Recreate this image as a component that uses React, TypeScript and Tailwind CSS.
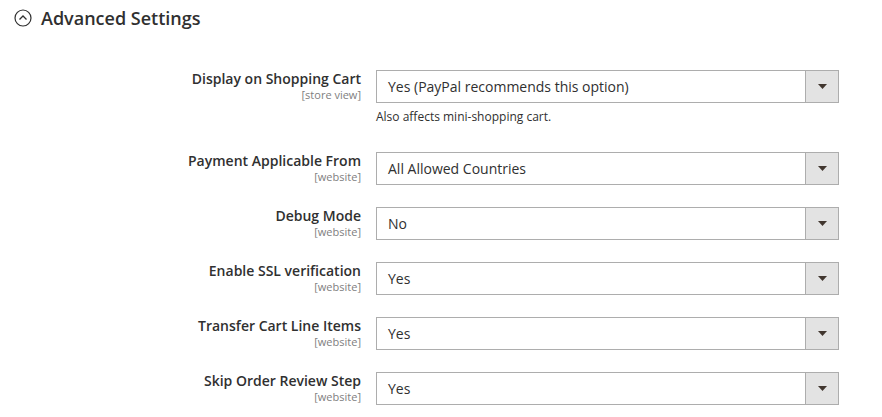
import React from 'react';

type Row = {
  label: string;
  scope: string;
  value: string;
  note?: string;
};

const ROWS: Row[] = [
  {
    label: 'Display on Shopping Cart',
    scope: '[store view]',
    value: 'Yes (PayPal recommends this option)',
    note: 'Also affects mini-shopping cart.'
  },
  { label: 'Payment Applicable From', scope: '[website]', value: 'All Allowed Countries' },
  { label: 'Debug Mode', scope: '[website]', value: 'No' },
  { label: 'Enable SSL verification', scope: '[website]', value: 'Yes' },
  { label: 'Transfer Cart Line Items', scope: '[website]', value: 'Yes' },
  { label: 'Skip Order Review Step', scope: '[website]', value: 'Yes' }
];

function SelectBox({ value }: { value: string }) {
  return (
    <div className="flex h-[33px] w-[463px] border border-[#adadad] bg-white">
      <div className="flex flex-1 items-center pl-[11px] text-[14px] text-[#303030]">{value}</div>
      <div className="flex w-[33px] items-center justify-center border-l border-[#adadad] bg-[#e3e3e3]">
        <svg width="9" height="5" viewBox="0 0 9 5">
          <path d="M0 0h9L4.5 5z" fill="#41362f" />
        </svg>
      </div>
    </div>
  );
}

export default function App() {
  return (
    <div
      className="h-[417px] w-[882px] overflow-hidden bg-white text-[#303030]"
      style={{ fontFamily: '"Open Sans", "Liberation Sans", sans-serif' }}
    >
      <div className="flex h-[35px] items-center pl-[14px]">
        <svg width="18" height="18" viewBox="0 0 18 18" className="mr-[9px]">
          <circle cx="9" cy="9" r="8" fill="none" stroke="#303030" strokeWidth="1.2" />
          <path d="M5.5 10.5 9 7l3.5 3.5" fill="none" stroke="#303030" strokeWidth="1.3" />
        </svg>
        <h2 className="text-[18px] font-semibold leading-none">Advanced Settings</h2>
      </div>

      <div className="mt-[35px] flex flex-col">
        {ROWS.map((row, i) => (
          <div key={row.label} className={i === 0 ? 'mb-[27px] flex' : 'mb-[22px] flex'}>
            <div className="w-[361px] text-right">
              <div className="text-[14px] font-semibold leading-[18px]">{row.label}</div>
              <div className="text-[11px] leading-[14px] text-[#808080]">{row.scope}</div>
            </div>
            <div className="ml-[15px]">
              <SelectBox value={row.value} />
              {row.note && (
                <div className="mt-[5px] text-[12px] leading-[17px] text-[#303030]">{row.note}</div>
              )}
            </div>
          </div>
        ))}
      </div>
    </div>
  );
}
